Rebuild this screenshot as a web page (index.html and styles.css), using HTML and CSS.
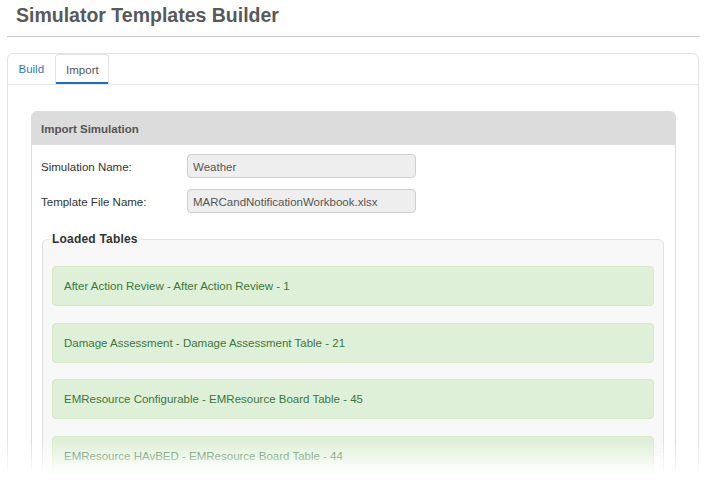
FILE: index.html
```html
<!DOCTYPE html>
<html lang="en">
<head>
    <meta charset="UTF-8">
    <meta name="viewport" content="width=device-width, initial-scale=1.0">
    <title>Simulator Templates Builder</title>
    <link rel="stylesheet" href="styles.css">
</head>
<body>
    <div class="page-header">
        <h1>Simulator Templates Builder</h1>
    </div>

    <div class="tabs-panel">
        <div class="tab-bar">
            <a class="tab" href="#build">Build</a>
            <a class="tab active" href="#import">Import</a>
        </div>

        <div class="tab-content">
            <div class="import-panel">
                <div class="import-heading">Import Simulation</div>
                <div class="import-body">
                    <div class="form-row">
                        <label class="form-label" for="simName">Simulation Name:</label>
                        <input class="form-input" id="simName" type="text" value="Weather" readonly>
                    </div>
                    <div class="form-row">
                        <label class="form-label" for="fileName">Template File Name:</label>
                        <input class="form-input" id="fileName" type="text" value="MARCandNotificationWorkbook.xlsx" readonly>
                    </div>

                    <fieldset class="loaded-tables">
                        <legend>Loaded Tables</legend>
                        <div class="table-item">After Action Review - After Action Review - 1</div>
                        <div class="table-item">Damage Assessment - Damage Assessment Table - 21</div>
                        <div class="table-item">EMResource Configurable - EMResource Board Table - 45</div>
                        <div class="table-item">EMResource HAvBED - EMResource Board Table - 44</div>
                    </fieldset>
                </div>
            </div>
        </div>
    </div>

    <!-- bottom of the page fades out -->
    <div class="fade-out"></div>
</body>
</html>
```

FILE: styles.css
```css
html {
    overflow: hidden;
}
body {
    margin: 0;
    font-family: "Liberation Sans", Arial, sans-serif;
    font-size: 11.5px;
    color: #333;
    background: #fff;
}
.page-header {
    height: 37px;
    box-sizing: border-box;
    padding-top: 3px;
    margin: 0 17px 0 7px;
    border-bottom: 1px solid #c9c9c9;
}
.page-header h1 {
    margin: 0;
    padding-left: 9px;
    font-size: 19.5px;
    line-height: 24px;
    font-weight: bold;
    color: #595959;
}
.tabs-panel {
    margin: 16px 18px 0 7px;
    border: 1px solid #e3e3e3;
    border-radius: 6px;
}
.tab-bar {
    display: flex;
    height: 30px;
    border-bottom: 1px solid #e8e8e8;
}
.tab {
    display: block;
    padding: 0 10.5px;
    line-height: 31px;
    color: #337ab7;
    text-decoration: none;
    box-sizing: border-box;
}
.tab.active {
    width: 54px;
    color: #555;
    border: 1px solid #e3e3e3;
    border-bottom: none;
    border-radius: 4px 4px 0 0;
    line-height: 30px;
    box-shadow: inset 0 -2px 0 #1d6cc0;
}
.tab-content {
    padding: 26px 22px 0 23px;
}
.import-panel {
    border: 1px solid #dcdcdc;
    border-bottom: none;
    border-radius: 6px 6px 0 0;
}
.import-heading {
    height: 33px;
    line-height: 34px;
    padding-left: 9px;
    background: #dcdcdc;
    border-radius: 5px 5px 0 0;
    font-weight: bold;
    color: #555;
}
.import-body {
    padding: 9px 11px 0 9px;
}
.form-row {
    display: flex;
    align-items: center;
    margin-bottom: 11px;
}
.form-label {
    width: 146px;
    padding-top: 1px;
    color: #333;
}
.form-input {
    width: 229px;
    height: 24px;
    box-sizing: border-box;
    padding: 1px 5px 0;
    border: 1px solid #cfcfcf;
    border-radius: 4px;
    background: #eee;
    font-family: inherit;
    font-size: 11.5px;
    color: #555;
    outline: none;
}
.loaded-tables {
    margin: 19px 0 0 1px;
    padding: 20px 9px 10px 9px;
    border: 1px solid #e0e0e0;
    border-radius: 6px;
    background: #f8f8f8;
}
.loaded-tables legend {
    margin-left: -3px;
    padding: 0 3px;
    font-size: 12px;
    font-weight: bold;
    line-height: 14px;
    color: #333;
    letter-spacing: 0.2px;
}
.table-item {
    height: 40px;
    box-sizing: border-box;
    margin-bottom: 16.67px;
    padding: 0 11px;
    line-height: 39px;
    border: 1px solid #d6e9c6;
    border-radius: 4px;
    background: #dff0d8;
    color: #3c763d;
}
.fade-out {
    position: fixed;
    left: 0;
    right: 0;
    bottom: 0;
    height: 46px;
    background: linear-gradient(to bottom, rgba(255, 255, 255, 0) 0%, #fff 72%);
}
```
